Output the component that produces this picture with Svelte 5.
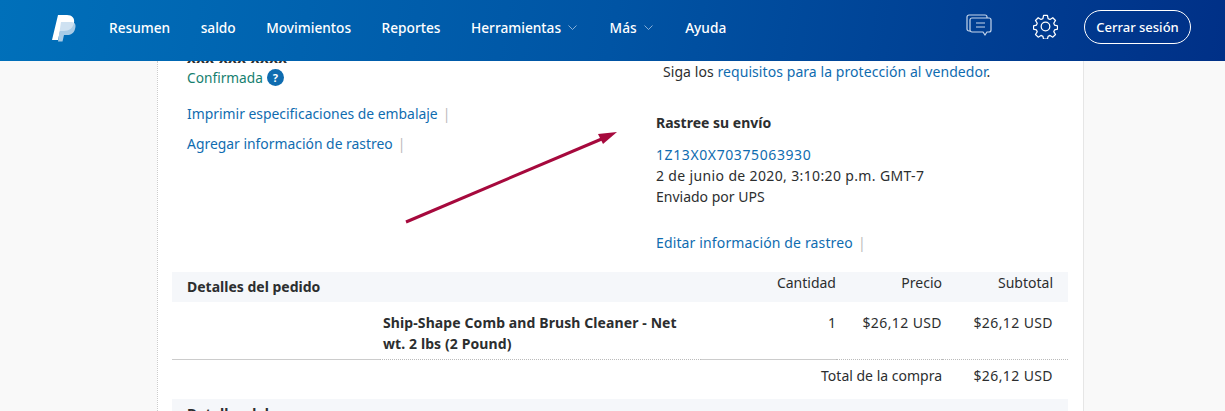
<script>
  const enlaces = [
    { texto: "Resumen" },
    { texto: "saldo" },
    { texto: "Movimientos" },
    { texto: "Reportes" },
    { texto: "Herramientas", menu: true },
    { texto: "Más", menu: true },
    { texto: "Ayuda" }
  ];

  const articulos = [
    {
      nombre: "Ship-Shape Comb and Brush Cleaner - Net wt. 2 lbs (2 Pound)",
      cantidad: 1,
      precio: "$26,12 USD",
      subtotal: "$26,12 USD"
    }
  ];
</script>

<header class="topbar">
  <svg class="logo" width="26" height="28" viewBox="0 0 26 28">
    <path d="M7 1h9c5 0 8 3 7 8-1 5-5 8-10 8H9l-2 9H1z" fill="#fff"/>
    <path d="M10 8h11c4 1 4 4 3 7-1 4-4 6-8 6h-3l-1.500 6.500H7z" fill="#c5dcee" opacity="0.85"/>
  </svg>
  <nav class="nav">
    {#each enlaces as enlace}
      <a href="#top" class="nav-link">
        {enlace.texto}
        {#if enlace.menu}
          <svg class="chevron" width="9" height="5" viewBox="0 0 9 5"><path d="M.5.500l4 4 4-4" fill="none" stroke="#a9c6e4" stroke-width="0.800"/></svg>
        {/if}
      </a>
    {/each}
  </nav>
  <div class="acciones">
    <svg class="icono-msg" width="26" height="24" viewBox="0 0 26 24" fill="none" stroke="#c5d6ec" stroke-width="1.200">
      <path d="M4 17H3a2 2 0 0 1-2-2V3a2 2 0 0 1 2-2h16a2 2 0 0 1 2 2v1"/>
      <path d="M6 4h17a2 2 0 0 1 2 2v10a2 2 0 0 1-2 2h-2l-2 3-2-3H6a2 2 0 0 1-2-2V6a2 2 0 0 1 2-2z"/>
      <path d="M10 9h9M10 13h9"/>
    </svg>
    <svg class="icono-gear" width="25" height="25" viewBox="0 0 26 26" fill="none" stroke="#fff" stroke-width="1.300">
      <circle cx="13" cy="13" r="4.500"/>
      <path d="M11 1.500h4l.7 3.300 2 .9 2.900-1.800 2.800 2.800-1.800 2.900.9 2 3 .7v3.400l-3 .7-.9 2 1.800 2.900-2.800 2.800-2.900-1.800-2 .9-.7 3h-4l-.7-3-2-.9-2.900 1.800-2.800-2.800 1.800-2.900-.9-2-3-.7v-3.400l3-.7.9-2-1.800-2.900 2.800-2.800 2.900 1.800 2-.9z" stroke-linejoin="round"/>
    </svg>
    <button class="cerrar">Cerrar sesión</button>
  </div>
</header>

<main class="pagina">
  <section class="tarjeta">
    <div class="resumen">
      <div class="col-izq">
        <p class="recortado">xxx xxx xxxx</p>
        <p class="confirmada">Confirmada <span class="ayuda">?</span></p>
        <p class="enlace-fila primera"><a href="#top">Imprimir especificaciones de embalaje</a><span class="sep">|</span></p>
        <p class="enlace-fila"><a href="#top">Agregar información de rastreo</a><span class="sep">|</span></p>
      </div>
      <div class="col-der">
        <p class="siga">Siga los <a href="#top">requisitos para la protección al vendedor</a>.</p>
        <h3>Rastree su envío</h3>
        <p><a class="rastreo" href="#top">1Z13X0X70375063930</a></p>
        <p class="fecha">2 de junio de 2020, 3:10:20 p.m. GMT-7</p>
        <p>Enviado por UPS</p>
        <p class="editar"><a href="#top">Editar información de rastreo</a><span class="sep">|</span></p>
      </div>
      <svg class="flecha" width="225" height="105" viewBox="0 0 225 105">
        <path d="M6 97L204 13" stroke="#a6093d" stroke-width="3" fill="none"/>
        <path d="M217 7L198 9l5 10z" fill="#a6093d"/>
      </svg>
    </div>

    <div class="fila cabecera">
      <div class="c-nombre"><strong>Detalles del pedido</strong></div>
      <div class="c-cant">Cantidad</div>
      <div class="c-precio">Precio</div>
      <div class="c-sub">Subtotal</div>
    </div>
    {#each articulos as a}
      <div class="fila articulo">
        <div class="c-vacia"></div>
        <div class="c-prod"><strong>{a.nombre}</strong></div>
        <div class="c-cant">{a.cantidad}</div>
        <div class="c-precio monto">{a.precio}</div>
        <div class="c-sub monto">{a.subtotal}</div>
      </div>
    {/each}
    <div class="fila total">
      <div class="c-total">Total de la compra</div>
      <div class="c-sub monto">$26,12 USD</div>
    </div>
    <div class="fila cabecera siguiente"><strong>Detalles del pago</strong></div>
  </section>
</main>

<style>
  :global(body) {
    background: #f9f9f9;
    font-family: "Noto Sans", "Open Sans", sans-serif;
    font-size: 14px;
    color: #2c2e2f;
    overflow: hidden;
    height: 411px;
  }

  .topbar {
    height: 61px;
    display: flex;
    align-items: center;
    background: linear-gradient(100deg, #0070ba 0%, #0054a4 50%, #003087 100%);
    position: relative;
    z-index: 2;
  }

  .logo {
    margin-left: 51px;
    margin-top: -6px;
  }

  .nav {
    display: flex;
    margin-left: 32px;
    gap: 30.5px;
    margin-top: -6px;
    font-size: 13.7px;
  }

  .nav-link {
    color: #fff;
    text-decoration: none;
    font-weight: 500;
    display: flex;
    align-items: center;
    gap: 7px;
  }

  .chevron {
    margin-right: 2px;
  }

  .acciones {
    margin-left: auto;
    margin-right: 34px;
    display: flex;
    align-items: center;
  }

  .icono-msg {
    margin-right: 41px;
    margin-top: -9px;
  }

  .icono-gear {
    margin-right: 26px;
    margin-top: -9px;
  }

  .cerrar {
    width: 107px;
    height: 34px;
    border: 1px solid #fff;
    border-radius: 17px;
    background: transparent;
    color: #fff;
    font: 500 13px "Noto Sans", sans-serif;
    padding: 0;
    margin-top: -7px;
  }

  .pagina {
    height: 350px;
    overflow: hidden;
  }

  .tarjeta {
    width: 927px;
    box-sizing: border-box;
    margin: 0 0 0 157px;
    height: 350px;
    background: #fff;
    border-left: 1px dotted #ccc;
    border-right: 1px solid #e6e6e6;
    padding: 0 15px 0 14px;
  }

  a {
    color: #0f6cb0;
    text-decoration: none;
  }

  p {
    margin: 0;
  }

  .resumen {
    display: flex;
    height: 211px;
    position: relative;
  }

  .col-izq {
    width: 484px;
    padding-left: 15px;
    box-sizing: border-box;
    flex-shrink: 0;
  }

  .recortado {
    height: 17px;
    line-height: 17px;
    margin-top: -12px;
    font-size: 15px;
    font-weight: 700;
    letter-spacing: 0.5px;
  }

  .confirmada {
    color: #16806f;
    display: flex;
    align-items: center;
    gap: 4px;
    height: 22px;
    font-size: 13.7px;
  }

  .ayuda {
    width: 17px;
    height: 17px;
    border-radius: 50%;
    background: #0f6cb0;
    color: #fff;
    font-size: 11px;
    font-weight: 700;
    text-align: center;
    line-height: 17px;
  }

  .enlace-fila {
    margin-top: 14px;
    line-height: 16px;
    font-size: 13.9px;
  }

  .enlace-fila.primera {
    margin-top: 18px;
  }

  .sep {
    color: #bbb;
    margin-left: 5px;
  }

  .col-der p {
    line-height: 21px;
  }

  .col-der .siga {
    margin: 0 0 0 7px;
    line-height: 22px;
    letter-spacing: 0.07px;
  }

  .col-der h3 {
    margin: 31px 0 12px;
    font-size: 14px;
    line-height: 18px;
    font-weight: 700;
  }

  .rastreo {
    letter-spacing: 0.6px;
  }

  .col-der .fecha {
    letter-spacing: 0.36px;
  }

  .col-der .editar {
    margin-top: 25px;
    letter-spacing: 0.14px;
  }

  .flecha {
    position: absolute;
    left: 228px;
    top: 64px;
  }

  .fila {
    display: flex;
  }

  .cabecera {
    background: #f5f7fa;
    height: 30px;
  }

  .cabecera strong {
    line-height: 30px;
    margin-left: 15px;
    font-size: 14px;
  }

  .c-nombre {
    width: 529px;
  }

  .c-cant, .c-precio, .c-sub, .c-total {
    text-align: right;
    line-height: 22px;
    box-sizing: border-box;
  }

  .c-cant {
    width: 135px;
  }

  .c-precio {
    width: 106px;
  }

  .c-sub {
    width: 126px;
    padding-right: 15px;
  }

  .monto {
    letter-spacing: 0.4px;
  }

  .articulo {
    height: 58px;
  }

  .articulo > div {
    height: 58px;
    padding-top: 10px;
    box-sizing: border-box;
    border-bottom: 1px dotted #bbb;
  }

  .articulo .c-vacia, .articulo .c-cant {
    border-bottom: 1px solid #ccc;
  }

  .c-vacia {
    width: 208px;
  }

  .articulo .c-prod {
    width: 321px;
    padding-left: 3px;
    padding-right: 20px;
    line-height: 21px;
    letter-spacing: 0.1px;
  }

  .total {
    height: 39px;
    padding-top: 5px;
    box-sizing: border-box;
  }

  .c-total {
    width: 770px;
  }

  .siguiente {
    height: 40px;
  }
</style>
